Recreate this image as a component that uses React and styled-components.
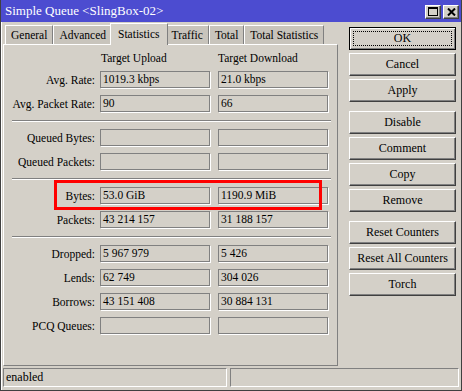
import React from 'react';
import styled, { createGlobalStyle } from 'styled-components';

const GlobalStyle = createGlobalStyle`
  html, body {
    margin: 0;
    padding: 0;
    background: #d4d0c8;
  }
  body {
    font-family: "Liberation Serif", "Times New Roman", serif;
    font-size: 11.5px;
    color: #000;
  }
`;

const groups = [
  [
    ['Avg. Rate:', '1019.3 kbps', '21.0 kbps'],
    ['Avg. Packet Rate:', '90', '66'],
  ],
  [
    ['Queued Bytes:', '', ''],
    ['Queued Packets:', '', ''],
  ],
  [
    ['Bytes:', '53.0 GiB', '1190.9 MiB', true],
    ['Packets:', '43 214 157', '31 188 157'],
  ],
  [
    ['Dropped:', '5 967 979', '5 426'],
    ['Lends:', '62 749', '304 026'],
    ['Borrows:', '43 151 408', '30 884 131'],
    ['PCQ Queues:', '', ''],
  ],
];

const tabs = ['General', 'Advanced', 'Statistics', 'Traffic', 'Total', 'Total Statistics'];

const buttonGroups = [
  ['OK', 'Cancel', 'Apply'],
  ['Disable', 'Comment', 'Copy', 'Remove'],
  ['Reset Counters', 'Reset All Counters', 'Torch'],
];

const App = () => {
  return (
    <>
      <GlobalStyle />
      <Window>
        <TitleBar>
          <Title>Simple Queue &lt;SlingBox-02&gt;</Title>
          <TitleButtons>
            <TitleButton>
              <svg width="10" height="9" viewBox="0 0 10 9">
                <rect x="0.5" y="0.5" width="9" height="8" fill="none" stroke="#000" />
                <rect x="0" y="0" width="10" height="2" fill="#000" />
              </svg>
            </TitleButton>
            <TitleButton>
              <svg width="9" height="8" viewBox="0 0 9 8">
                <path d="M1 0.5 L8 7.5 M8 0.5 L1 7.5" stroke="#000" strokeWidth="2" />
              </svg>
            </TitleButton>
          </TitleButtons>
        </TitleBar>
        <Body>
          <TabArea>
            <TabStrip>
              {tabs.map((t) => (
                <Tab key={t} active={t === 'Statistics'}>
                  {t}
                </Tab>
              ))}
            </TabStrip>
            <Panel>
              <HeaderRow>
                <HeaderCell>Target Upload</HeaderCell>
                <HeaderCell>Target Download</HeaderCell>
              </HeaderRow>
              {groups.map((rows, gi) => (
                <React.Fragment key={gi}>
                  {gi > 0 && <Separator />}
                  <Group>
                    {rows.map(([label, up, down, marked]) => (
                      <Row key={label}>
                        <Label>{label}</Label>
                        <Field>{up}</Field>
                        <Field second>{down}</Field>
                        {marked && <Highlight />}
                      </Row>
                    ))}
                  </Group>
                </React.Fragment>
              ))}
            </Panel>
          </TabArea>
          <ButtonColumn>
            {buttonGroups.map((g, gi) => (
              <ButtonGroup key={gi}>
                {g.map((b) => (
                  <Button key={b} focused={b === 'OK'}>
                    <span>{b}</span>
                  </Button>
                ))}
              </ButtonGroup>
            ))}
          </ButtonColumn>
        </Body>
        <StatusBar>
          <StatusField width="224px">enabled</StatusField>
          <StatusField width="229px" />
        </StatusBar>
      </Window>
    </>
  );
};

const Window = styled.div`
  width: 462px;
  height: 391px;
  box-sizing: border-box;
  background: #d4d0c8;
  border: 1px solid #404040;
  border-top: none;
  box-shadow: inset 1px 0 0 #fff;
  display: flex;
  flex-direction: column;
  overflow: hidden;
`;

const TitleBar = styled.div`
  height: 22px;
  background: #4c4cd0;
  display: flex;
  align-items: center;
  justify-content: space-between;
  padding: 0 3px 0 5px;
  margin: 0 -1px;
`;

const Title = styled.div`
  color: #fff;
  font-size: 13px;
`;

const TitleButtons = styled.div`
  display: flex;
  gap: 2px;
  margin-top: 1px;
`;

const TitleButton = styled.div`
  width: 16px;
  height: 14px;
  box-sizing: border-box;
  background: #d4d0c8;
  border: 1px solid;
  border-color: #fff #404040 #404040 #fff;
  box-shadow: inset -1px -1px 0 #808080;
  display: flex;
  align-items: center;
  justify-content: center;
`;

const Body = styled.div`
  display: flex;
  padding: 1px 0 0 2px;
`;

const TabArea = styled.div`
  width: 335px;
  display: flex;
  flex-direction: column;
`;

const TabStrip = styled.div`
  display: flex;
  align-items: flex-end;
  height: 21px;
  padding-left: 2px;
  position: relative;
  z-index: 1;
`;

const Tab = styled.div`
  height: ${(p) => (p.active ? '22px' : '19px')};
  box-sizing: border-box;
  padding: ${(p) => (p.active ? '2px 7px 0' : '1px 5px 0')};
  margin: ${(p) => (p.active ? '0 -2px -1px' : '0')};
  background: ${(p) => (p.active ? '#d4d0c8' : '#c8c4bc')};
  border-top: 1px solid #fff;
  border-left: 1px solid #fff;
  border-right: 1px solid #808080;
  position: relative;
  z-index: ${(p) => (p.active ? 2 : 0)};
  line-height: 16px;
  white-space: nowrap;
`;

const Panel = styled.div`
  position: relative;
  height: 322px;
  box-sizing: border-box;
  border-top: 1px solid #fff;
  border-left: 1px solid #fff;
  border-right: 1px solid #808080;
  border-bottom: 1px solid #808080;
  padding-top: 6px;
`;

const HeaderRow = styled.div`
  display: flex;
  padding-left: 97px;
  height: 14px;
  line-height: 14px;
  margin-bottom: 6px;
`;

const HeaderCell = styled.div`
  width: 117px;
`;

const Group = styled.div`
  display: flex;
  flex-direction: column;
  gap: 7px;
`;

const Separator = styled.div`
  margin: 8px 6px 7px 8px;
  height: 0;
  border-top: 1px solid #808080;
  border-bottom: 1px solid #fff;
`;

const Row = styled.div`
  position: relative;
  display: flex;
  align-items: center;
  height: 17px;
`;

const Label = styled.div`
  width: 91px;
  text-align: right;
  white-space: nowrap;
`;

const Field = styled.div`
  width: 110px;
  height: 17px;
  box-sizing: border-box;
  margin-left: ${(p) => (p.second ? '8px' : '5px')};
  border: 1px solid #808080;
  box-shadow: 1px 1px 0 #fff;
  padding-left: 2px;
  line-height: 15px;
  white-space: nowrap;
`;

const Highlight = styled.div`
  position: absolute;
  left: 50px;
  top: -7px;
  width: 268px;
  height: 30px;
  box-sizing: border-box;
  border: 3px solid #ff0000;
  pointer-events: none;
`;

const ButtonColumn = styled.div`
  margin-left: 11px;
  padding-top: 4px;
  display: flex;
  flex-direction: column;
  gap: 9px;
`;

const ButtonGroup = styled.div`
  display: flex;
  flex-direction: column;
  gap: 3px;
`;

const Button = styled.div`
  width: 107px;
  height: 23px;
  box-sizing: border-box;
  border: 1px solid;
  border-color: ${(p) => (p.focused ? '#000' : '#fff #404040 #404040 #fff')};
  box-shadow: ${(p) =>
    p.focused
      ? 'inset 1px 1px 0 #fff, inset -1px -1px 0 #808080'
      : 'inset -1px -1px 0 #808080'};
  display: flex;
  align-items: center;
  justify-content: center;
  font-size: 12px;
  position: relative;
  &::after {
    content: '';
    display: ${(p) => (p.focused ? 'block' : 'none')};
    position: absolute;
    inset: 3px;
    border: 1px dotted #000;
  }
`;

const StatusBar = styled.div`
  display: flex;
  gap: 3px;
  padding: 2px 2px 0 2px;
`;

const StatusField = styled.div`
  width: ${(p) => p.width};
  height: 19px;
  box-sizing: border-box;
  border: 1px solid;
  border-color: #808080 #fff #fff #808080;
  padding-left: 2px;
  line-height: 17px;
  font-size: 12px;
`;

export default App;
